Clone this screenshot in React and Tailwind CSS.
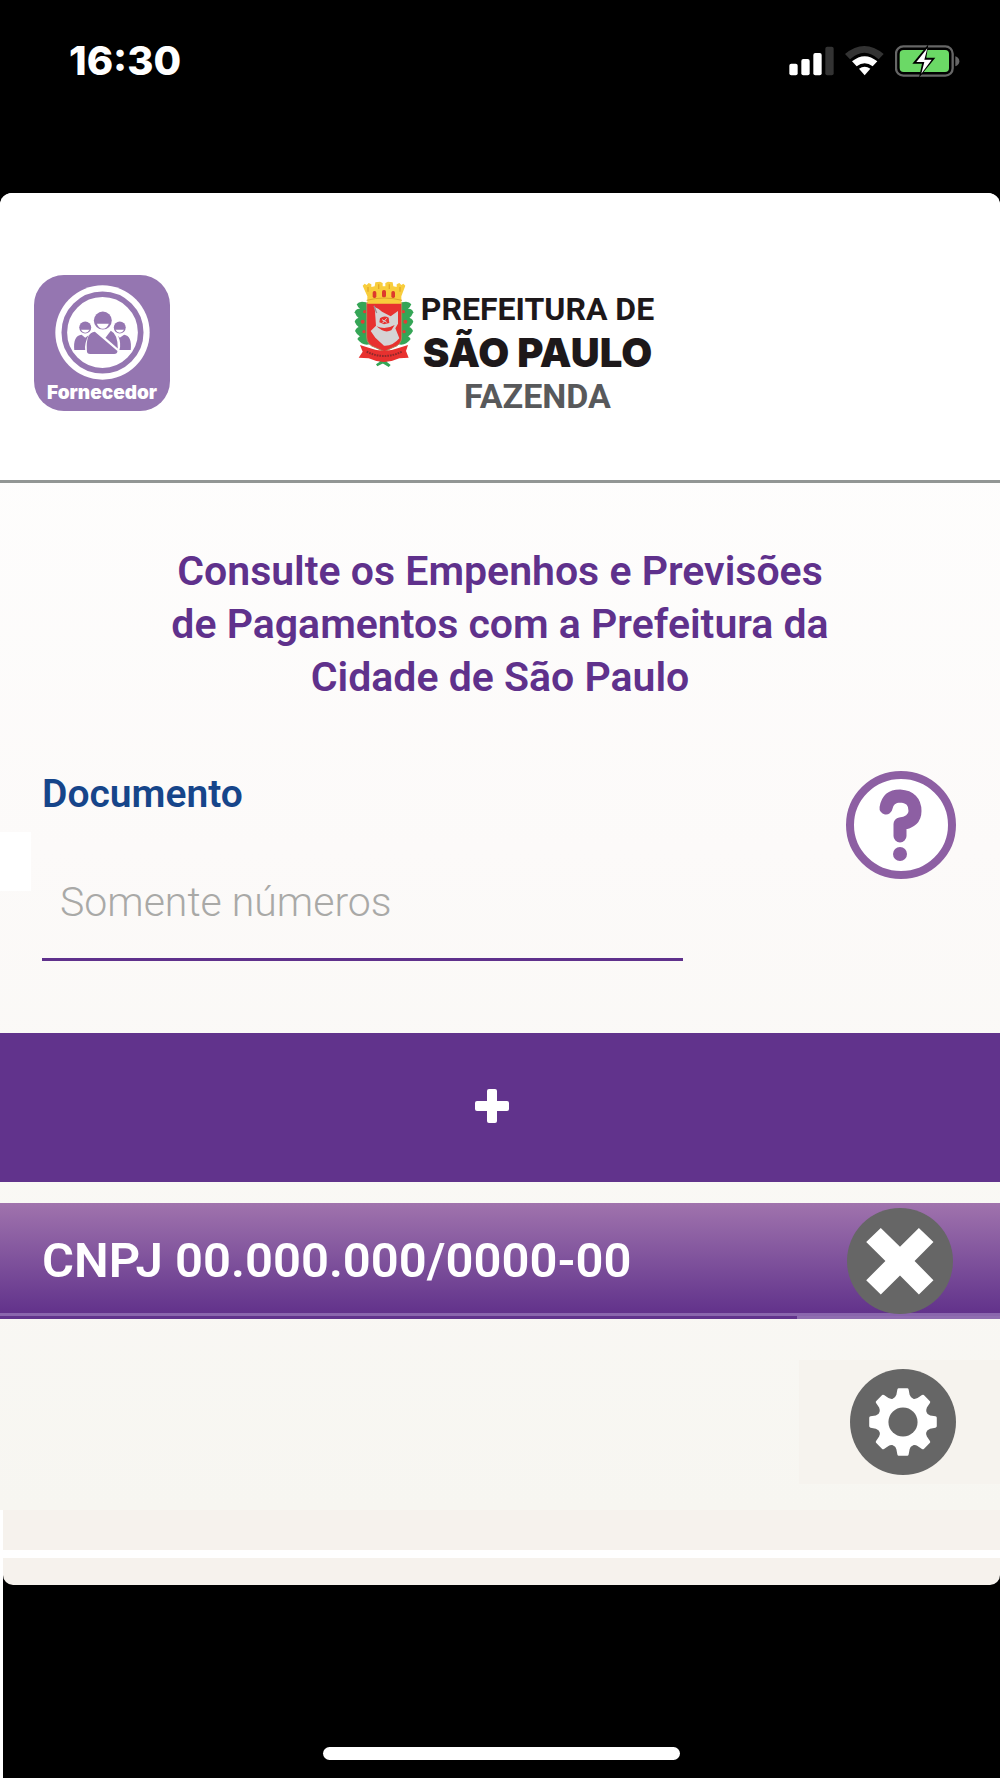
import React from 'react';

const TEETH = [0, 45, 90, 135, 180, 225, 270, 315];

const SignalIcon = () => (
  <svg viewBox="56 45 135 90" className="w-[45px] h-[30px]">
    <rect x="57" y="98" width="25" height="35" rx="6" fill="#fff" />
    <rect x="93" y="84" width="25" height="49" rx="6" fill="#fff" />
    <rect x="129" y="66" width="25" height="67" rx="6" fill="#fff" />
    <rect x="165" y="47" width="25" height="86" rx="6" fill="#333" />
  </svg>
);

const WifiIcon = () => (
  <svg viewBox="224 45 117 90" className="w-[39px] h-[30px]">
    <path d="M224 69 Q282 21 340 69 L325 85 Q282 46 239 85Z" fill="#333" />
    <path d="M245 91 Q283 60 321 91 L307 106 Q283 87 259 106Z" fill="#fff" />
    <path d="M266 113 Q283 101 300 113 L283 133Z" fill="#fff" />
  </svg>
);

const BatteryIcon = () => (
  <svg viewBox="375 42 195 96" className="w-[65px] h-[32px]">
    <rect x="378" y="46" width="170" height="88" rx="22" fill="none" stroke="#666" strokeWidth="7" />
    <rect x="389" y="57" width="148" height="66" rx="12" fill="#6bd966" />
    <path d="M556 76 q12 4 12 15 t-12 15z" fill="#666" />
    <path d="M475 40 L427 98 H456 L447 140 L496 80 H469Z" fill="#000" />
    <path d="M472 52 L439 93 H463 L454 128 L485 86 H463Z" fill="#fff" />
  </svg>
);

const StatusBar = () => (
  <div className="flex items-center justify-between h-[193px] pl-[69px] pr-[40px] pb-[72px]">
    <span className="font-['Inter',sans-serif] font-extrabold text-[40px] leading-[48px] text-white">16:30</span>
    <div className="flex items-center gap-[11px]">
      <SignalIcon />
      <WifiIcon />
      <BatteryIcon />
    </div>
  </div>
);

const SupplierBadge = () => (
  <div className="flex flex-col items-center w-[136px] h-[136px] pt-[10px] rounded-[30px] bg-[#9576b1]">
    <svg viewBox="104 75 286 284" className="w-[95px] h-[95px]">
      <circle cx="247" cy="217" r="142" fill="#fff" />
      <circle cx="247" cy="217" r="115" fill="none" stroke="#9576b1" strokeWidth="17" />
      <g fill="#9576b1">
        <circle cx="195" cy="202" r="18" />
        <circle cx="299" cy="202" r="18" />
        <path d="M162 270 Q158 226 184 224 L195 233 L205 225 Q192 250 195 270Z" />
        <path d="M332 270 Q336 226 312 224 L299 233 L294 227 Q304 250 298 270Z" />
        <circle cx="248" cy="181" r="27" />
        <path d="M200 272 Q196 217 224 215 L292 273 Q292 282 282 282 H210 Q200 282 200 272Z" />
        <path d="M272 212 Q293 222 293 265 L256 233Z" />
      </g>
      <g fill="#fff">
        <path d="M230 191 H266 Q260 206 248 206 T230 191Z" />
        <path d="M182 209 H208 Q203 218 195 218 T182 209Z" />
        <path d="M286 209 H312 Q307 218 299 218 T286 209Z" />
      </g>
    </svg>
    <span className="font-['Inter',sans-serif] font-black text-[19px] leading-[26px] text-white">Fornecedor</span>
  </div>
);

const CoatOfArms = () => (
  <svg viewBox="50 34 180 261" className="w-[60px] h-[87px]">
    {/* coffee branches */}
    <g fill="#35a556">
      <path d="M86 98 Q66 92 58 104 Q66 126 92 126Z" />
      <path d="M90 126 Q58 108 52 128 Q62 156 94 154Z" />
      <path d="M92 150 Q58 136 52 156 Q64 184 96 178Z" />
      <path d="M94 174 Q60 164 53 184 Q66 210 100 202Z" />
      <path d="M98 196 Q70 190 60 208 Q78 234 108 220Z" />
      <path d="M194 98 Q214 92 222 104 Q214 126 188 126Z" />
      <path d="M190 126 Q222 108 228 128 Q218 156 186 154Z" />
      <path d="M188 150 Q222 136 228 156 Q216 184 184 178Z" />
      <path d="M186 174 Q220 164 227 184 Q214 210 180 202Z" />
      <path d="M182 196 Q210 190 220 208 Q202 234 172 220Z" />
      <path d="M96 262 Q126 272 154 292 L160 286 Q134 264 100 254Z" />
      <path d="M182 262 Q152 272 120 290 L116 284 Q144 264 178 254Z" />
    </g>
    <g fill="#e23b36">
      <circle cx="82" cy="126" r="5" />
      <circle cx="76" cy="156" r="6" />
      <circle cx="80" cy="186" r="5" />
      <circle cx="198" cy="126" r="5" />
      <circle cx="204" cy="156" r="6" />
      <circle cx="200" cy="186" r="5" />
    </g>
    {/* shield */}
    <path d="M88 99 H193 V202 Q193 226 166 234 L141 246 L115 234 Q88 226 88 202Z" fill="#e8312f" stroke="#a98a5c" strokeWidth="3" />
    <path d="M112 112 L124 118 L134 126 L160 140 L182 124 V162 L174 176 L186 206 Q166 230 140 228 L114 204 L100 184 L116 168 L114 140Z" fill="#d5d3d4" />
    <path d="M128 146 Q140 136 154 144 L156 160 L140 164 L126 158Z" fill="#e8312f" />
    <path d="M118 170 Q144 182 172 166 L162 182 Q140 192 118 170Z" fill="#e8312f" />
    <path d="M134 150 L148 158 M148 146 L136 160" stroke="#d5d3d4" strokeWidth="3" />
    <path d="M110 108 L118 130" stroke="#9c8f90" strokeWidth="4" />
    {/* mural crown */}
    <path d="M76 48 L82 42 L88 46 L94 40 L102 44 V52 L112 50 L114 38 L128 36 L136 40 V50 H144 V40 L152 36 L166 38 L168 50 L178 52 V44 L186 40 L192 46 L198 42 L204 48 L192 80 V102 H90 V80Z" fill="#f8cd3c" />
    <path d="M88 92 Q140 78 194 92" fill="none" stroke="#dda52b" strokeWidth="3" />
    <path d="M92 52 V66 M188 52 V66 M124 44 V58 M156 44 V58" stroke="#e3a926" strokeWidth="4" />
    <g fill="#dd3a2c">
      <rect x="106" y="64" width="11" height="21" rx="5" />
      <rect x="134" y="61" width="12" height="22" rx="5" />
      <rect x="162" y="64" width="11" height="21" rx="5" />
    </g>
    {/* motto ribbon */}
    <path d="M68 226 L94 234 Q140 252 186 234 L212 226 L206 244 L214 264 L186 266 Q140 288 94 266 L64 264 L76 246Z" fill="#e8312f" />
    <path d="M88 246 Q140 272 194 246" fill="none" stroke="#8f2a2c" strokeWidth="6" strokeDasharray="5 3" />
  </svg>
);

const CityLogo = () => (
  <div className="flex items-start gap-[7px]">
    <CoatOfArms />
    <div className="flex flex-col items-center pt-[8px] whitespace-nowrap text-[#1d181a]">
      <span className="font-bold text-[32px] leading-[40px]">PREFEITURA DE</span>
      <span className="font-['Inter',sans-serif] font-black text-[40px] leading-[47px]">SÃO PAULO</span>
      <span className="font-bold text-[34px] leading-[40px] text-[#58595b]">FAZENDA</span>
    </div>
  </div>
);

const HelpIcon = () => (
  <svg viewBox="0 0 111 109" className="w-[111px] h-[109px]">
    <ellipse cx="55" cy="54" rx="51" ry="50" fill="#fff" stroke="#8d5fa3" strokeWidth="8" />
    <path d="M40 37 Q42 25 54 25 Q69 26 69 40 Q69 51 54 53 V65" fill="none" stroke="#8d5fa3" strokeWidth="13" strokeLinecap="round" strokeLinejoin="round" />
    <circle cx="54" cy="83" r="7" fill="#8d5fa3" />
  </svg>
);

const CloseIcon = () => (
  <svg viewBox="200 53 320 320" className="w-[106px] h-[106px]">
    <circle cx="360" cy="213" r="160" fill="#666" />
    <path d="M302 113 L360 170 L417 113 L461 156 L404 213 L461 271 L417 314 L360 257 L302 314 L258 271 L316 213 L258 156Z" fill="#fff" />
  </svg>
);

const GearIcon = () => (
  <svg viewBox="-160 -160 320 320" className="w-[106px] h-[106px]">
    <circle r="160" fill="#666" />
    <g fill="#fff">
      <circle r="75" />
      {TEETH.map((angle) => (
        <path
          key={angle}
          d="M-13 -102 H13 Q16 -102 17 -98 L20 -82 Q22 -74 34 -67 L0 -40 L-34 -67 Q-22 -74 -20 -82 L-17 -98 Q-16 -102 -13 -102Z"
          transform={`rotate(${angle})`}
        />
      ))}
    </g>
    <circle r="44" fill="#666" />
  </svg>
);

const App = () => {
  return (
    <div className="flex flex-col min-h-screen bg-black font-['Roboto',sans-serif]">
      <StatusBar />

      <main className="rounded-t-[12px] bg-linear-to-b from-white via-[#fcfaf9] to-[#f7f6f1]">
        <header className="grid grid-cols-[1fr_auto_1fr] items-start h-[290px] pt-[82px] pl-[34px] pr-[26px] rounded-t-[12px] bg-white border-b-[3px] border-[#929694]">
          <SupplierBadge />
          <div className="pt-[6px]">
            <CityLogo />
          </div>
        </header>

        <h1 className="max-w-[680px] mx-auto pt-[62px] text-center font-semibold text-[41px] leading-[53px] text-[#5f318c]">
          Consulte os Empenhos e Previsões de Pagamentos com a Prefeitura da Cidade de São Paulo
        </h1>

        <form className="flex items-start justify-between pt-[67px] pb-[72px] pl-[42px] pr-[43px]">
          <div className="relative flex flex-col w-[641px]">
            <div className="absolute -left-[42px] top-[61px] w-[31px] h-[59px] bg-white" />
            <label htmlFor="documento" className="font-semibold text-[39px] leading-[46px] text-[#16458a]">
              Documento
            </label>
            <input
              id="documento"
              type="text"
              inputMode="numeric"
              placeholder="Somente números"
              className="w-full h-[115px] mt-[29px] pl-[18px] border-b-[3px] border-[#5f318c] outline-none font-light text-[41px] text-[#333] placeholder:text-[#a9a9a7]"
            />
          </div>
          <button type="button" aria-label="Ajuda">
            <HelpIcon />
          </button>
        </form>

        <button type="button" aria-label="Adicionar" className="flex items-center justify-center w-full h-[149px] pr-[16px] pb-[4px] bg-[#61338c]">
          <svg viewBox="0 0 34 34" className="w-[34px] h-[34px]" fill="#fff">
            <rect x="12" y="0" width="10" height="34" rx="2" />
            <rect x="0" y="12" width="34" height="10" rx="2" />
          </svg>
        </button>

        <div className="mt-[21px]">
          <div className="flex items-center justify-between h-[113px] pt-[5px] pl-[42px] pr-[47px] border-b-[3px] border-[#8a66ad] bg-linear-to-b from-[#a073ad] to-[#62328b]">
            <span className="font-semibold text-[49px] leading-[56px] text-white">CNPJ 00.000.000/0000-00</span>
            <button type="button" aria-label="Remover">
              <CloseIcon />
            </button>
          </div>
          <div className="flex justify-end h-[3px] bg-[#61338c]">
            <div className="w-[203px] bg-[#8f6db0]" />
          </div>
        </div>

        <div className="flex justify-end pt-[41px] pb-[26px]">
          <div className="flex items-center justify-end w-[201px] h-[124px] pr-[44px] bg-[#f6f3ee]">
            <button type="button" aria-label="Configurações">
              <GearIcon />
            </button>
          </div>
        </div>
      </main>

      <div className="flex flex-col grow pl-[3px] bg-white">
        <div className="h-[40px] bg-[#f6f2ed]" />
        <div className="mt-[8px] bg-black">
          <div className="h-[27px] rounded-b-[10px] bg-[#f6f2ed]" />
        </div>
        <div className="flex grow items-end justify-center pb-[18px] bg-black">
          <div className="w-[357px] h-[13px] rounded-full bg-white" />
        </div>
      </div>
    </div>
  );
};

export default App;
